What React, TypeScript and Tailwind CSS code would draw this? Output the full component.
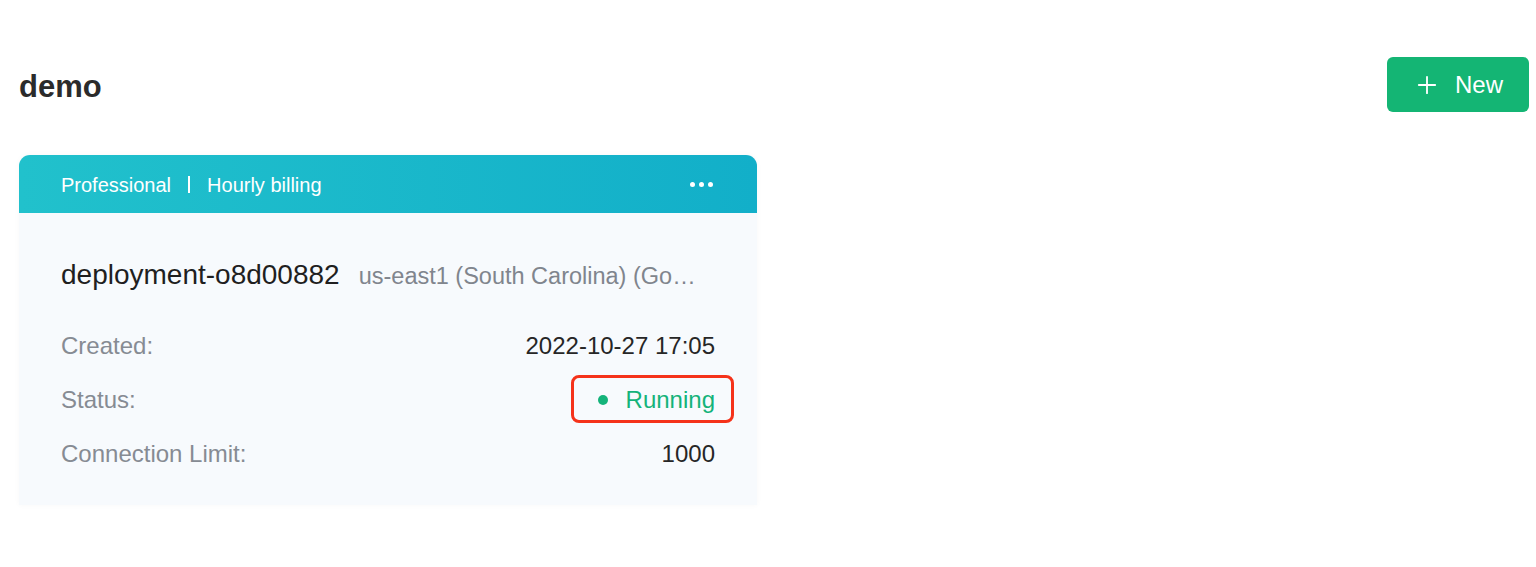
import { Plus } from "lucide-react";

type InfoRow = { label: string; value: string; status?: boolean };

const ROWS: InfoRow[] = [
  { label: "Created:", value: "2022-10-27 17:05" },
  { label: "Status:", value: "Running", status: true },
  { label: "Connection Limit:", value: "1000" },
];

function DeploymentCard() {
  return (
    <div className="w-[738px] bg-[#f7fafd] rounded-t-[11px] shadow-[0_0_6px_rgba(0,0,0,0.03)]">
      <div className="h-[58px] rounded-t-[11px] bg-gradient-to-r from-[#21c1cc] to-[#12afc9] flex items-center justify-between pl-[42px] pr-[44px] text-white text-[20px]">
        <div className="flex items-center pt-[1px]">
          <span>Professional</span>
          <span className="w-[2px] h-[17px] bg-white mx-[17px]" />
          <span>Hourly billing</span>
        </div>
        <div className="flex items-center gap-[4px]">
          <span className="w-[5px] h-[5px] rounded-full bg-white" />
          <span className="w-[5px] h-[5px] rounded-full bg-white" />
          <span className="w-[5px] h-[5px] rounded-full bg-white" />
        </div>
      </div>

      <div className="px-[42px] pt-[45px] pb-[24px]">
        <div className="flex items-baseline gap-[19px] h-[34px] leading-[34px]">
          <span className="text-[28px] text-[#1f1f1f] shrink-0">deployment-o8d00882</span>
          <span className="text-[23.5px] text-[#80858d] whitespace-nowrap">
            us-east1 (South Carolina) (Go…
          </span>
        </div>

        <div className="mt-[27px]">
          {ROWS.map((row) => (
            <div key={row.label} className="h-[54px] flex items-center justify-between text-[24px]">
              <span className="text-[#868b93]">{row.label}</span>
              {row.status ? (
                <span className="relative flex items-center h-[34px] text-[#14b37a]">
                  <span className="w-[10px] h-[10px] rounded-full bg-[#14b37a] mr-[18px]" />
                  {row.value}
                  <span className="absolute -left-[27px] -right-[19px] -top-[8px] -bottom-[6px] border-[3px] border-[#f5321a] rounded-[8px]" />
                </span>
              ) : (
                <span className="text-[#262626]">{row.value}</span>
              )}
            </div>
          ))}
        </div>
      </div>
    </div>
  );
}

export default function App() {
  return (
    <div className="w-[1536px] h-[567px] bg-white pl-[19px] pr-[7px] pt-[57px] font-['Liberation_Sans',Arial,sans-serif]">
      <div className="flex items-center justify-between h-[55px]">
        <h1 className="text-[31px] font-bold text-[#2b2b2b] leading-none mt-[4px]">demo</h1>
        <button
          type="button"
          className="w-[142px] h-[55px] rounded-[6px] bg-[#14b574] text-white text-[24px] flex items-center justify-center gap-[14px]"
        >
          <Plus className="w-[28px] h-[28px]" strokeWidth={1.6} />
          <span>New</span>
        </button>
      </div>

      <div className="mt-[43px]">
        <DeploymentCard />
      </div>
    </div>
  );
}
